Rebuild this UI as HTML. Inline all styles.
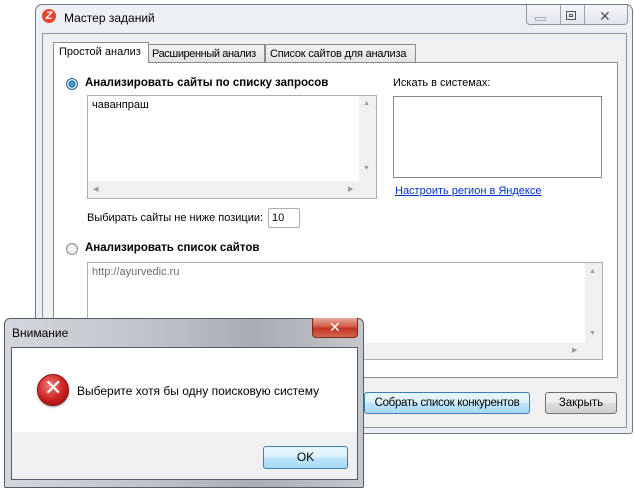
<!DOCTYPE html><html><head><meta charset="utf-8"><style>
body{margin:0;width:634px;height:489px;background:#fff;position:relative;overflow:hidden;font-family:"Liberation Sans","DejaVu Sans",sans-serif;font-size:11px;color:#000}
.a{position:absolute;box-sizing:border-box}
.t{position:absolute;white-space:nowrap}
.btn{position:absolute;box-sizing:border-box;border:1px solid #707070;border-radius:3px;background:linear-gradient(#f2f2f2 0,#ebebeb 50%,#dddddd 51%,#cfcfcf 100%);text-align:center;font-size:12px}
.radio{position:absolute;width:12px;height:12px;border-radius:50%;border:1px solid #8e8f8f;background:radial-gradient(#fff,#dcdcdc);box-sizing:border-box}
</style></head><body>
<div class="a" style="left:35px;top:4px;width:598px;height:430px;border:1px solid #707a86;border-radius:7px 7px 3px 3px;background:#ecf0f5"></div>
<div class="t" style="left:42px;top:9px;width:14px;height:14px;border-radius:50%;background:#e8432c;color:#fff;font-weight:bold;font-size:11px;text-align:center;line-height:14px;font-style:italic">Z</div>
<div class="t" style="left:64px;top:11px;font-size:12px">Мастер заданий</div>
<div class="a" style="left:526px;top:5px;width:102px;height:20px;border:1px solid #8d96a2;border-top:none;border-radius:0 0 4px 4px;background:linear-gradient(#f4f6f9,#e2e7ee)"></div>
<div class="a" style="left:560px;top:5px;width:1px;height:20px;background:#9aa2ad"></div>
<div class="a" style="left:584px;top:5px;width:1px;height:20px;background:#9aa2ad"></div>
<div class="a" style="left:535px;top:17px;width:11px;height:4px;border:1px solid #a8b0ba"></div>
<div class="a" style="left:566px;top:11px;width:10px;height:9px;border:1px solid #555"></div>
<div class="a" style="left:569px;top:14px;width:4px;height:3px;border:1px solid #555"></div>
<div class="t" style="left:599px;top:8px;font-size:14px;color:#555">✕</div>
<div class="a" style="left:42px;top:33px;width:585px;height:395px;border:1px solid #8e959e;background:#f0f0f0"></div>
<div class="a" style="left:53px;top:62px;width:565px;height:316px;border:1px solid #898c95;background:#fff"></div>
<div class="a" style="left:148px;top:44px;width:117px;height:19px;border:1px solid #898c95;background:linear-gradient(#f2f2f2,#e3e3e3)"></div>
<div class="t" style="left:152px;top:48px;letter-spacing:-0.4px">Расширенный анализ</div>
<div class="a" style="left:265px;top:44px;width:151px;height:19px;border:1px solid #898c95;background:linear-gradient(#f2f2f2,#e3e3e3)"></div>
<div class="t" style="left:270px;top:48px;letter-spacing:-0.2px">Список сайтов для анализа</div>
<div class="a" style="left:53px;top:42px;width:96px;height:21px;border:1px solid #898c95;border-bottom:none;background:#fff"></div>
<div class="t" style="left:59px;top:46px">Простой анализ</div>
<div class="radio" style="left:66px;top:78px;border-color:#2c628b;background:radial-gradient(#5ec0f0 0,#1a6aa8 45%,#e6ecf2 55%)"></div>
<div class="t" style="left:85px;top:77px;font-weight:bold;font-size:11.5px">Анализировать сайты по списку запросов</div>
<div class="a" style="left:87px;top:95px;width:290px;height:104px;border:1px solid #abadb3;background:#fff"></div>
<div class="t" style="left:92px;top:99px">чаванпраш</div>
<div class="a" style="left:359px;top:96px;width:17px;height:85px;background:#f0f0f0"></div>
<div class="t" style="left:363px;top:100px;font-size:7px;color:#999">▲</div>
<div class="t" style="left:363px;top:165px;font-size:7px;color:#999">▼</div>
<div class="a" style="left:88px;top:181px;width:271px;height:17px;background:#f0f0f0"></div>
<div class="t" style="left:93px;top:185px;font-size:7px;color:#999">◀</div>
<div class="t" style="left:348px;top:185px;font-size:7px;color:#999">▶</div>
<div class="a" style="left:359px;top:181px;width:17px;height:17px;background:#f0f0f0"></div>
<div class="t" style="left:393px;top:77px">Искать в системах:</div>
<div class="a" style="left:393px;top:96px;width:209px;height:82px;border:1px solid #828790;background:#fff"></div>
<div class="t" style="left:395px;top:185px;color:#0033cc;text-decoration:underline">Настроить регион в Яндексе</div>
<div class="t" style="left:87px;top:212px">Выбирать сайты не ниже позиции:</div>
<div class="a" style="left:268px;top:208px;width:32px;height:20px;border:1px solid #abadb3;border-radius:2px;background:#fff"></div>
<div class="t" style="left:272px;top:212px">10</div>
<div class="radio" style="left:66px;top:243px"></div>
<div class="t" style="left:85px;top:242px;font-weight:bold;font-size:11.5px">Анализировать список сайтов</div>
<div class="a" style="left:87px;top:262px;width:516px;height:98px;border:1px solid #abadb3;background:#fff"></div>
<div class="t" style="left:92px;top:266px;color:#6d6d6d">http://ayurvedic.ru</div>
<div class="a" style="left:585px;top:263px;width:17px;height:80px;background:#f0f0f0"></div>
<div class="t" style="left:589px;top:268px;font-size:7px;color:#999">▲</div>
<div class="t" style="left:589px;top:330px;font-size:7px;color:#999">▼</div>
<div class="a" style="left:88px;top:343px;width:514px;height:16px;background:#f0f0f0"></div>
<div class="t" style="left:572px;top:346px;font-size:7px;color:#999">▶</div>
<div class="btn" style="left:364px;top:392px;width:166px;height:22px;border-color:#3c7fb1;line-height:20px;font-size:11.5px;letter-spacing:-0.3px;background:linear-gradient(#eaf6fd,#d9f0fc 50%,#bee6fd 51%,#a7d9f5)">Собрать список конкурентов</div>
<div class="btn" style="left:545px;top:392px;width:72px;height:22px;line-height:20px;font-size:11.5px">Закрыть</div>
<div class="a" style="left:4px;top:318px;width:360px;height:170px;border:1px solid #555c66;border-radius:6px 6px 2px 2px;background:linear-gradient(90deg,#d4d8dd,#bfc4ca 40%,#a8adb3 70%,#c4c8cd)"></div>
<div class="t" style="left:12px;top:326px;font-size:12px">Внимание</div>
<div class="a" style="left:312px;top:318px;width:46px;height:20px;border:1px solid #7a2a20;border-top:none;border-radius:0 0 4px 4px;background:linear-gradient(#e9a99d,#d0543f 50%,#c03020 51%,#d5664f)"></div>
<div class="t" style="left:329px;top:319px;color:#fff;font-weight:bold;font-size:14px">✕</div>
<div class="a" style="left:11px;top:347px;width:347px;height:133px;border:1px solid #555c66;background:#f0f0f0"></div>
<div class="a" style="left:12px;top:348px;width:345px;height:84px;background:#fff"></div>
<div class="a" style="left:37px;top:374px;width:32px;height:32px;border-radius:50%;border:1px solid #8a1010;background:radial-gradient(circle at 40% 35%,#f07a7a,#cc1f1f 55%,#8e0c0c);box-shadow:0 1px 2px #999"></div>
<div class="t" style="left:44px;top:375px;color:#fff;font-weight:bold;font-size:22px">✕</div>
<div class="t" style="left:77px;top:384px;font-size:12px">Выберите хотя бы одну поисковую систему</div>
<div class="btn" style="left:263px;top:446px;width:85px;height:23px;border-color:#3c7fb1;line-height:21px;background:linear-gradient(#eaf6fd,#d9f0fc 50%,#bee6fd 51%,#a7d9f5)">OK</div>
</body></html>
